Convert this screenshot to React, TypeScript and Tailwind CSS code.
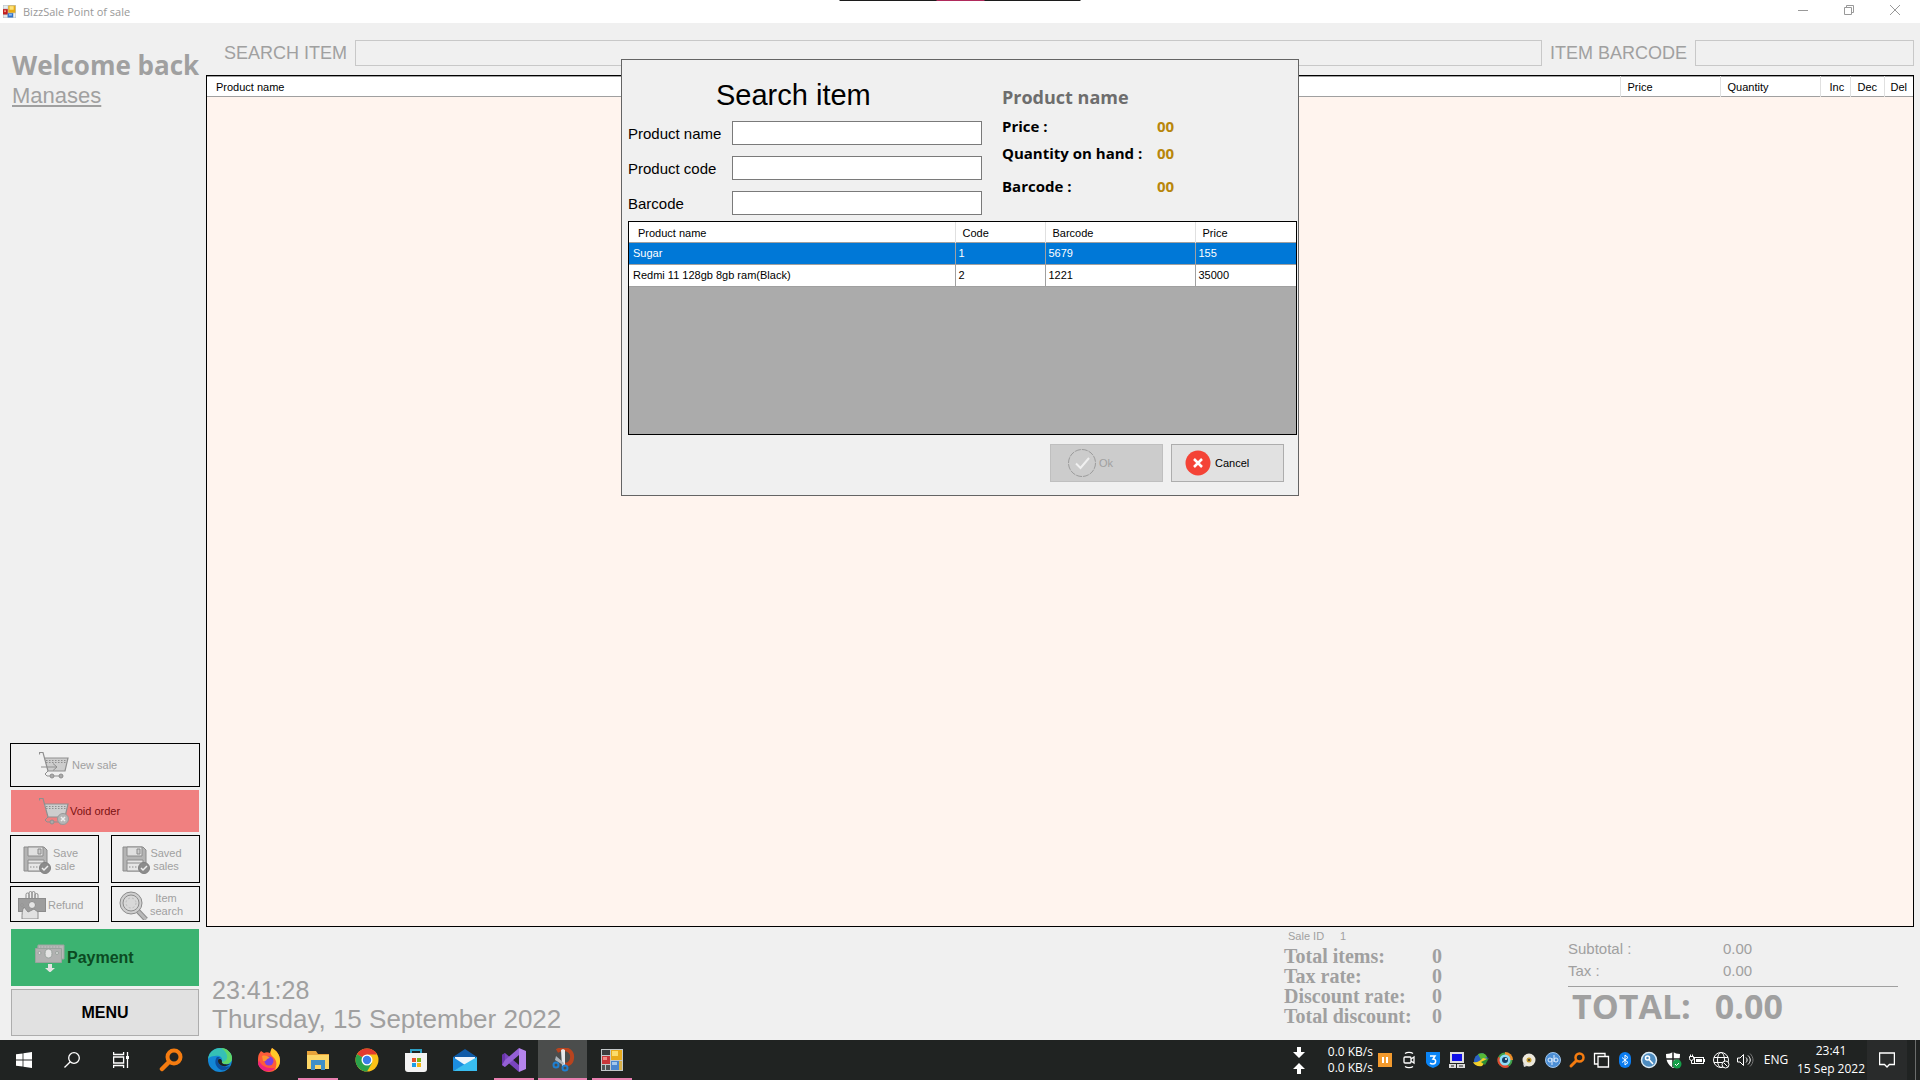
import React from 'react';
import clsx from 'clsx';

const products = [
  { name: 'Sugar', code: '1', barcode: '5679', price: '155' },
  { name: 'Redmi 11 128gb 8gb ram(Black)', code: '2', barcode: '1221', price: '35000' },
];

const searchFields = [
  { id: 'product-name', label: 'Product name' },
  { id: 'product-code', label: 'Product code' },
  { id: 'barcode', label: 'Barcode' },
];

const totals = ['Total items:', 'Tax rate:', 'Discount rate:', 'Total discount:'];

const FormIcon = ({ className }: { className: string }) => (
  <svg viewBox="0 0 22 22" className={className}>
    <rect x="0" y="0" width="22" height="22" fill="#b9c4cc" />
    <rect x="1" y="1" width="7" height="5" fill="#e6ecef" />
    <rect x="0" y="7" width="8" height="9" fill="#c41f1f" />
    <rect x="2" y="9" width="3" height="3" fill="#f0a090" />
    <rect x="9" y="1" width="12" height="12" fill="#e9ac14" />
    <rect x="11" y="2" width="7" height="6" fill="#fde27a" />
    <rect x="1" y="17" width="6" height="4" fill="#e4e8ea" />
    <rect x="8" y="14" width="9" height="7" fill="#2f70c9" />
    <rect x="10" y="15" width="5" height="3" fill="#8dbcf0" />
    <rect x="18" y="14" width="3" height="7" fill="#eef2f4" />
  </svg>
);

const FormIconLarge = () => (
  <svg viewBox="0 0 22 22" className="size-[22px]">
    <rect x="0" y="0" width="22" height="22" fill="#c3c8ca" />
    <rect x="1" y="1" width="8" height="5" fill="#3b3d3e" />
    <rect x="1" y="7" width="8" height="8" fill="#c9363a" />
    <rect x="2" y="8" width="4" height="3" fill="#f08c88" />
    <rect x="10" y="1" width="11" height="10" fill="#e9ab1c" />
    <rect x="11" y="2" width="6" height="5" fill="#fbdc6c" />
    <rect x="1" y="16" width="3" height="5" fill="#505355" />
    <rect x="5" y="16" width="4" height="5" fill="#505355" />
    <rect x="10" y="12" width="8" height="9" fill="#4b86cf" />
    <rect x="11" y="13" width="5" height="3" fill="#a5c8ec" />
    <rect x="18" y="12" width="3" height="9" fill="#d8b04a" />
  </svg>
);

const CartIcon = ({ voided = false }: { voided?: boolean }) => (
  <svg viewBox="0 0 30 28" className="h-7 w-[30px] shrink-0" fill="none" stroke="#8f8f8f">
    <path d="M5 7h24l-3 13H9z" fill="#cdcdcd" stroke="none" />
    <path d="M0.5 3.500V1.500H4l5 18.500M5 7h24l-3 13H9" strokeWidth="1.200" />
    <path d="M7 9.500h20M7 11.500h20" strokeDasharray="1.500 1.500" />
    <path d="M9 20l-3 3 2 2h16" />
    <circle cx="13" cy="25" r="2" fill="#aaa" />
    <circle cx="22" cy="25" r="2" fill="#aaa" />
    {voided ? (
      <>
        <circle cx="24" cy="22" r="5.500" fill="#b5b5b5" stroke="#999" />
        <path d="M22 20l4 4m0-4l-4 4" stroke="#eee" strokeWidth="1.500" />
      </>
    ) : (
      <path d="M2 16h16m-4-3.500l4 3.500-4 3.500" />
    )}
  </svg>
);

const FloppyIcon = () => (
  <svg viewBox="0 0 28 28" className="size-7 shrink-0" fill="none" stroke="#8c8c8c">
    <path d="M1 1h20l3 3v21H1z" fill="#b4b4b4" />
    <path d="M5 1h15v9H5z" fill="#e0e0e0" />
    <path d="M15 3h3v5h-3z" fill="#ccc" />
    <path d="M5 14h16v11H5z" fill="#e6e6e6" />
    <path d="M5 17h16" />
    <path d="M7 21h9" strokeDasharray="1.500 1.500" />
    <circle cx="22" cy="22" r="5.500" fill="#8c8c8c" stroke="#808080" />
    <path d="M19 22l2 2 4-4" stroke="#eee" strokeWidth="1.500" />
  </svg>
);

const RefundIcon = () => (
  <svg viewBox="0 0 28 28" className="h-7 w-7 shrink-0" fill="none" stroke="#8c8c8c">
    <path d="M8 8V3.500a1.500 1.500 0 013 0V7 2a1.500 1.500 0 013 0v5-5a1.500 1.500 0 013 0v6-4a1.500 1.500 0 013 0v5" fill="#efefef" />
    <rect x="0.500" y="7.500" width="27" height="13" fill="#9d9d9d" />
    <circle cx="14" cy="14" r="3.500" fill="#e5e5e5" />
    <circle cx="4" cy="14" r="1" fill="#ddd" />
    <path d="M4 28c0-5 0-9 2-12l4 5 6-3 4 3v7z" fill="#e1e1e1" />
  </svg>
);

const MagnifierIcon = () => (
  <svg viewBox="0 0 30 29" className="h-[29px] w-[30px] shrink-0" fill="none" stroke="#8c8c8c">
    <path d="M18 19l9 9.500" strokeWidth="5" />
    <path d="M19 20l8 8.500" stroke="#b9b9b9" strokeWidth="3" />
    <circle cx="12" cy="12" r="11" fill="#cfcfcf" />
    <circle cx="12" cy="12" r="8" fill="#d8d8d8" />
    <circle cx="12" cy="12" r="5" stroke="#bbb" strokeDasharray="2 2" />
  </svg>
);

const CashIcon = () => (
  <svg viewBox="0 0 30 28" className="h-7 w-[30px] shrink-0" fill="none" stroke="#9aa39e">
    <path d="M3 1h26v14H3z" fill="#b8b8b8" />
    <path d="M0.500 4.500h26v14h-26z" fill="#b1b1b1" />
    <path d="M2 3h23" strokeDasharray="1.500 1.500" />
    <ellipse cx="13.500" cy="9.500" rx="3.500" ry="4.500" fill="#e4e4e4" />
    <circle cx="4.500" cy="9" r="1.500" fill="#ddd" />
    <circle cx="22" cy="9" r="1.500" fill="#ddd" />
    <path d="M13 20h4v4h3l-5 4.500-5-4.500h3z" fill="#e2e2e2" stroke="none" />
  </svg>
);

type SideButtonProps = {
  icon: React.ReactNode;
  className: string;
  children: React.ReactNode;
};

const SideButton = ({ icon, className, children }: SideButtonProps) => (
  <button type="button" className={clsx('flex items-center overflow-hidden', className)}>
    {icon}
    {children}
  </button>
);

const Sidebar = () => (
  <aside className="flex w-[206px] shrink-0 flex-col justify-between pb-1 text-[11px] leading-[13px] text-[#a0a0a0]">
    <div className="pt-6 pl-3">
      <h1 className="font-['Open_Sans'] text-[26px] leading-9 font-bold whitespace-nowrap">Welcome back</h1>
      <a href="#user" className="text-[22px] leading-[26px] underline underline-offset-2">
        Manases
      </a>
    </div>
    <div className="flex flex-col gap-[3px] pr-1.5 pl-2.5">
      <SideButton icon={<CartIcon />} className="h-11 gap-[3px] border border-black pl-7">
        New sale
      </SideButton>
      <SideButton icon={<CartIcon voided />} className="mx-px h-[42px] gap-px bg-[#f08080] pl-7 text-[#7a1010]">
        Void order
      </SideButton>
      <div className="grid grid-cols-2 gap-x-3 gap-y-[3px]">
        <SideButton icon={<FloppyIcon />} className="h-12 gap-0.5 border border-black pt-0.5 pl-3">
          <span className="w-6">Save sale</span>
        </SideButton>
        <SideButton icon={<FloppyIcon />} className="h-12 border border-black pt-0.5 pl-2.5">
          <span className="w-8">Saved sales</span>
        </SideButton>
        <SideButton icon={<RefundIcon />} className="h-9 gap-0.5 border border-black pt-0.5 pl-[7px]">
          Refund
        </SideButton>
        <SideButton icon={<MagnifierIcon />} className="h-9 gap-px border border-black pt-0.5 pl-[7px]">
          <span className="w-8">Item search</span>
        </SideButton>
      </div>
      <SideButton
        icon={<CashIcon />}
        className="mx-px mt-1 h-[57px] gap-0.5 bg-[#3cb371] pl-6 text-base font-bold text-[#0b4a22]"
      >
        Payment
      </SideButton>
      <button type="button" className="mx-px h-[47px] border border-[#adadad] bg-[#e1e1e1] text-base font-bold text-black">
        MENU
      </button>
    </div>
  </aside>
);

const SaleTable = () => (
  <div className="flex-1 border border-black bg-[#fff4ee]">
    <table className="w-full table-fixed border-collapse bg-white text-left text-[11px] leading-4">
      <thead>
        <tr className="h-5 border-t border-b border-[#a0a0a0]">
          <th className="pl-[9px] font-normal">Product name</th>
          <th className="w-[100px] border-l border-[#e0e0e0] pl-[7px] font-normal">Price</th>
          <th className="w-[100px] border-l border-[#e0e0e0] pl-[7px] font-normal">Quantity</th>
          <th className="w-[30px] border-l border-[#e0e0e0] pl-[9px] font-normal">Inc</th>
          <th className="w-[34px] border-l border-[#e0e0e0] pl-[7px] font-normal">Dec</th>
          <th className="w-[29px] border-l border-[#e0e0e0] pl-1.5 font-normal">Del</th>
        </tr>
      </thead>
    </table>
  </div>
);

const Summary = () => (
  <footer className="flex h-[113px] shrink-0 justify-between pr-[22px]">
    <div className="flex flex-col justify-end pb-1.5 pl-1.5 text-[25px] leading-[29px]">
      <time>23:41:28</time>
      <span className="text-[26px]">Thursday, 15 September 2022</span>
    </div>
    <div className="flex">
      <div className="w-[284px] pt-px">
        <div className="flex gap-4 pb-0.5 pl-1 text-[11px] leading-4">
          <span>Sale ID</span>
          <span>1</span>
        </div>
        <dl className="grid grid-cols-[148px_1fr] font-['Liberation_Serif'] text-[20px] leading-5 font-bold">
          {totals.map(label => (
            <React.Fragment key={label}>
              <dt>{label}</dt>
              <dd>0</dd>
            </React.Fragment>
          ))}
        </dl>
      </div>
      <div className="w-[330px] pt-[11px]">
        <dl className="grid grid-cols-[155px_1fr] border-b border-[#a0a0a0] pb-1 text-[15px] leading-[22px]">
          <dt>Subtotal :</dt>
          <dd>0.00</dd>
          <dt>Tax :</dt>
          <dd>0.00</dd>
        </dl>
        <div className="flex gap-6 pl-1 font-['Open_Sans'] text-[34px] leading-[38px] font-bold">
          <span>TOTAL:</span>
          <span>0.00</span>
        </div>
      </div>
    </div>
  </footer>
);

const SearchDialog = () => (
  <div
    role="dialog"
    aria-labelledby="dialog-title"
    className="absolute top-[59px] left-1/2 w-[678px] -translate-x-1/2 border border-[#646464] bg-[#f0f0f0] pb-[13px] pl-1.5 text-black"
  >
    <div className="flex gap-5">
      <div className="w-[354px]">
        <h2 id="dialog-title" className="pt-[19px] pb-2.5 pl-[88px] text-[29px] leading-8">
          Search item
        </h2>
        <div className="flex flex-col gap-[11px]">
          {searchFields.map(({ id, label }) => (
            <div key={id} className="flex h-6 items-center justify-between">
              <label htmlFor={id} className="pt-px text-[15px] leading-5">
                {label}
              </label>
              <input id={id} className="h-6 w-[250px] border border-[#7a7a7a] bg-white px-1 text-[15px] outline-none" />
            </div>
          ))}
        </div>
      </div>
      <div className="pt-[25px] font-['Open_Sans'] text-[15px] leading-6 font-bold">
        <h3 className="mb-[5px] text-[18px] text-[#6d6d6d]">Product name</h3>
        <dl className="grid grid-cols-[155px_1fr]">
          <dt>Price :</dt>
          <dd className="text-[#b8860b]">00</dd>
          <dt className="pt-[3px]">Quantity on hand :</dt>
          <dd className="pt-[3px] text-[#b8860b]">00</dd>
          <dt className="pt-[9px]">Barcode :</dt>
          <dd className="pt-[9px] text-[#b8860b]">00</dd>
        </dl>
      </div>
    </div>
    <div className="mt-1.5 mr-px h-[214px] border border-black bg-[#ababab]">
      <table className="w-full table-fixed border-collapse bg-white text-left text-[11px] leading-4">
        <thead>
          <tr className="h-5 border-b border-[#a0a0a0]">
            <th className="pt-0.5 pl-[9px] font-normal">Product name</th>
            <th className="w-[90px] border-l border-[#e0e0e0] pt-0.5 pl-[7px] font-normal">Code</th>
            <th className="w-[150px] border-l border-[#e0e0e0] pt-0.5 pl-[7px] font-normal">Barcode</th>
            <th className="w-[101px] border-l border-[#e0e0e0] pt-0.5 pl-[7px] font-normal">Price</th>
          </tr>
        </thead>
        <tbody>
          {products.map((product, i) => (
            <tr key={product.code} className={clsx('h-[22px] border-b border-[#a0a0a0]', i === 0 && 'bg-[#0078d7] text-white')}>
              <td className="pl-1">{product.name}</td>
              <td className="border-l border-[#a0a0a0] pl-[3px]">{product.code}</td>
              <td className="border-l border-[#a0a0a0] pl-[3px]">{product.barcode}</td>
              <td className="border-l border-[#a0a0a0] pl-[3px]">{product.price}</td>
            </tr>
          ))}
        </tbody>
      </table>
    </div>
    <div className="mt-[9px] mr-3.5 flex justify-end gap-2 text-[11px]">
      <button
        type="button"
        disabled
        className="flex h-[38px] w-[113px] items-center gap-0.5 border border-[#bfbfbf] bg-[#cccccc] pl-4 text-[#a0a0a0]"
      >
        <svg viewBox="0 0 30 30" className="size-[30px]" fill="none">
          <circle cx="15" cy="15" r="13.500" stroke="#9c9c9c" strokeDasharray="6 1" />
          <path d="M9 15.500l4.500 4.500L22 10" stroke="#f0f0f0" strokeWidth="2" />
        </svg>
        Ok
      </button>
      <button type="button" className="flex h-[38px] w-[113px] items-center gap-1 border border-[#adadad] bg-[#e1e1e1] pl-[13px]">
        <svg viewBox="0 0 26 26" className="size-[26px]" fill="none">
          <circle cx="13" cy="13" r="12.500" fill="#f44336" />
          <path d="M9 9l8 8m0-8l-8 8" stroke="#fff" strokeWidth="2.500" />
        </svg>
        Cancel
      </button>
    </div>
  </div>
);

const apps = [
  {
    name: 'Finder',
    icon: (
      <g fill="none" stroke="#f57c10">
        <circle cx="15" cy="9" r="6.500" strokeWidth="4" />
        <path d="M10 14l-7 7" strokeWidth="4.500" strokeLinecap="round" />
      </g>
    ),
  },
  {
    name: 'Edge',
    icon: (
      <>
        <circle cx="12" cy="12" r="12" fill="#1386d6" />
        <path d="M0 11C1 4 6 0 12 0c7 0 12 5 12 10 0 4-3 6-6 6-4 0-5-1-4-3 1-4-3-6-7-5-3 0-6 1-7 3z" fill="#35c0b5" />
        <path d="M13 0c6 0 11 5 11 10 0 4-3 6-6 6-3 0-5-1-4-2 8-1 6-10-1-14z" fill="#5fd668" />
        <path d="M9 9c-3 4-2 10 4 13 4 1 7-1 9-4-6 2-12-1-12-5 0-2 1-3 2-4z" fill="#0c4f9f" />
        <path d="M14 13c-1-3-4-3-4 0 0 3 4 6 8 5 2-1 3-1 4-2-5 1-9 0-8-3z" fill="#1f2220" />
      </>
    ),
  },
  {
    name: 'Firefox',
    icon: (
      <>
        <path d="M2 6l2-3 3 2c2-1 4-1 6 0l2-5c5 3 8 7 8 13 0 6-5 11-11 11S1 19 1 13c0-3 0-5 1-7z" fill="#ff5b3a" />
        <path d="M15 0c5 3 8 7 8 13 0 4-2 7-5 9 3-7 1-11-3-14-2-2-2-5 0-8z" fill="#ffc928" />
        <path d="M2 12c2 6 8 9 16 8-6 6-15 3-17-4z" fill="#f0237c" />
        <circle cx="12" cy="13" r="4.500" fill="#7b3fe4" />
        <path d="M5 8c3-1 6 0 8 2-4 0-3 4-7 3z" fill="#ff9430" />
      </>
    ),
  },
  {
    name: 'File Explorer',
    open: true,
    icon: (
      <>
        <path d="M1 3h9l2 3h11v15H1z" fill="#e8a33a" />
        <path d="M1 7h22v14H1z" fill="#fcd667" />
        <path d="M5 12h14v10h-4v-5H9v5H5z" fill="#3f8fc9" />
      </>
    ),
  },
  {
    name: 'Chrome',
    icon: (
      <>
        <circle cx="12" cy="12" r="11.500" fill="#fbc116" />
        <path d="M12 12L2 6.300A11.500 11.500 0 0122 6.300z" fill="#e33b2e" />
        <path d="M2 6.300A11.500 11.500 0 0012 23.500l5-8.500-5-3z" fill="#2aa14b" />
        <path d="M12 6.500h10L17 15z" fill="#fbc116" />
        <circle cx="12" cy="12" r="5.500" fill="#fff" />
        <circle cx="12" cy="12" r="4.200" fill="#3b7de9" />
      </>
    ),
  },
  {
    name: 'Microsoft Store',
    icon: (
      <>
        <path d="M7 6V2h10v4" fill="none" stroke="#2d9fc4" strokeWidth="2" />
        <path d="M1 5h22v16a3 3 0 01-3 3H4a3 3 0 01-3-3z" fill="#f3f3f3" />
        <path d="M8 10h4v4H8z" fill="#e5502c" />
        <path d="M13 10h4v4h-4z" fill="#7cb518" />
        <path d="M8 15h4v4H8z" fill="#1c9ee8" />
        <path d="M13 15h4v4h-4z" fill="#f5b613" />
      </>
    ),
  },
  {
    name: 'Mail',
    icon: (
      <>
        <path d="M0 9l12-8 12 8v5H0z" fill="#0f5ba8" />
        <path d="M2 9h20v8H2z" fill="#eef5fb" />
        <path d="M0 9l12 8-12 6z" fill="#1c8de0" />
        <path d="M24 9v14H0l12-7z" fill="#39bdf0" />
      </>
    ),
  },
  {
    name: 'Visual Studio',
    open: true,
    icon: (
      <>
        <path d="M17 0l7 3v18l-7 3z" fill="#b584ec" />
        <path d="M0 7l3-2 14 12v7L3 12z" fill="#7a45bf" />
        <path d="M0 17V7l3-2v14z" fill="#6935ab" />
        <path d="M3 19l14-12V0L3 12l-3 5z" fill="#9460d6" />
      </>
    ),
  },
  {
    name: 'Snipping Tool',
    open: true,
    active: true,
    icon: (
      <>
        <path d="M6 3c8-5 16 0 15 7 0 5-5 8-9 6" fill="none" stroke="#b8441f" strokeWidth="4" />
        <path d="M10 2l2-1 2 1v16h-3z" fill="#e6e9ec" />
        <path d="M5 8l8 7-1 2-8-5z" fill="#aab3ba" />
        <circle cx="5" cy="17" r="2.500" fill="none" stroke="#1e7fd0" strokeWidth="2" />
        <circle cx="14" cy="20" r="2.500" fill="none" stroke="#1e7fd0" strokeWidth="2" />
      </>
    ),
  },
];

const trayIcons = [
  {
    name: 'Pause',
    icon: (
      <>
        <rect x="1" y="1" width="14" height="14" fill="#f29a2e" />
        <path d="M6 5v6m4-6v6" stroke="#fff" strokeWidth="2" />
      </>
    ),
  },
  {
    name: 'Meet now',
    icon: (
      <g fill="none" stroke="#fff" strokeWidth="1.300">
        <rect x="3" y="5" width="7" height="6" rx="1" />
        <path d="M10 7l3-2v6l-3-2M4 1.500c2-1.500 6-1.500 8 0M4 14.500c2 1.500 6 1.500 8 0" />
      </g>
    ),
  },
  {
    name: 'Shield',
    icon: (
      <>
        <path d="M1 0h14v10c0 3-4 5-7 6-3-1-7-3-7-6z" fill="#0a84f5" />
        <path d="M5 4h5L8 7c4 0 3 5 0 5-1 0-2 0-3-1" fill="none" stroke="#fff" strokeWidth="1.500" />
      </>
    ),
  },
  {
    name: 'Remote display',
    icon: (
      <>
        <path d="M1 0h14v11H1zM0 12h7v4H0zM8 12h8v4H8z" fill="#dcdcdc" />
        <rect x="3" y="2" width="10" height="7" fill="#1010e8" />
        <path d="M2 14h3m5 0h4" stroke="#222" />
      </>
    ),
  },
  {
    name: 'Download manager',
    icon: (
      <>
        <path d="M1 9c0-5 5-8 9-8l5 5-6 7c-4 1-8-1-8-4z" fill="#2a62c4" />
        <path d="M5 2c5-2 8 0 9 3L8 8z" fill="#55b938" />
        <path d="M0 10c4 1 7-1 10-4l5 1-6 7c-4 1-8-1-9-4z" fill="#f2cf2a" />
        <path d="M8 10l8-4-4 7z" fill="#2e8f35" />
      </>
    ),
  },
  {
    name: 'Eye',
    icon: (
      <>
        <circle cx="8" cy="8" r="7.500" fill="#42a047" />
        <path d="M8 0a8 8 0 018 8H8z" fill="#ee8f28" />
        <path d="M1 5a8 8 0 0011 10L8 8z" fill="#e0492f" />
        <circle cx="8" cy="8" r="5.500" fill="#8fdcf5" />
        <circle cx="8" cy="8" r="3" fill="#143f66" />
        <circle cx="9" cy="7" r="1" fill="#fff" />
      </>
    ),
  },
  {
    name: 'Disc',
    icon: (
      <>
        <circle cx="8" cy="8" r="6.500" fill="#ece8dc" />
        <circle cx="8" cy="8" r="2.500" fill="#c49b2a" />
        <circle cx="8" cy="8" r="1" fill="#333" />
        <path d="M2 11l4 3-3 1z" fill="#ddd" />
      </>
    ),
  },
  {
    name: 'Torrent client',
    icon: (
      <>
        <circle cx="8" cy="8" r="7.500" fill="#4c8fd6" stroke="#9cc4ec" />
        <g fill="none" stroke="#dcecff">
          <circle cx="5" cy="8" r="2" />
          <circle cx="11" cy="8" r="2" />
          <path d="M7 6v7M9 3v7" />
        </g>
      </>
    ),
  },
  {
    name: 'Finder',
    icon: (
      <g fill="none" stroke="#f57c10">
        <circle cx="10.500" cy="5.500" r="4" strokeWidth="2.500" />
        <path d="M7 9l-5 5" strokeWidth="3" strokeLinecap="round" />
      </g>
    ),
  },
  {
    name: 'Windows',
    icon: (
      <g fill="none" stroke="#fff" strokeWidth="1.300">
        <path d="M5 4.500h10.500v10.500H5z" />
        <path d="M5 12H1.500V1.500H12v3" />
      </g>
    ),
  },
  {
    name: 'Bluetooth',
    icon: (
      <>
        <rect x="2" y="0" width="12" height="16" rx="6" fill="#0a7cf0" />
        <path d="M5 5.500l6 5-3 2.500V3l3 2.500-6 5" fill="none" stroke="#fff" />
      </>
    ),
  },
  {
    name: 'Key',
    icon: (
      <>
        <circle cx="8" cy="8" r="7.500" fill="#4d8cc0" stroke="#dcebf5" strokeWidth="1.500" />
        <circle cx="6.500" cy="6" r="2" fill="none" stroke="#fff" strokeWidth="1.500" />
        <path d="M8 7.500l4 4.500" stroke="#fff" strokeWidth="1.500" />
      </>
    ),
  },
  {
    name: 'Security',
    icon: (
      <>
        <path d="M1 2c3 0 5-1 7-2 2 1 4 2 7 2 0 7-2 11-7 14C3 13 1 9 1 2z" fill="#fff" />
        <path d="M8 0v15M1 7h14" stroke="#202322" strokeWidth="1.500" />
        <circle cx="12" cy="12" r="4.500" fill="#16a04a" />
        <path d="M10 12l1.500 1.500L14 11" fill="none" stroke="#fff" />
      </>
    ),
  },
  {
    name: 'Battery',
    icon: (
      <>
        <path d="M0.500 4.500h4v2a2 2 0 01-4 0zM1.500 2.500v2M3.500 2.500v2M2.500 8.500v3H5" fill="none" stroke="#fff" />
        <rect x="5.500" y="5.500" width="9" height="6" fill="#202322" stroke="#fff" />
        <rect x="7" y="7" width="6" height="3" fill="#fff" />
        <path d="M15.500 7v3" stroke="#fff" />
      </>
    ),
  },
  {
    name: 'Network',
    icon: (
      <>
        <g fill="none" stroke="#fff">
          <circle cx="8" cy="8" r="7.500" />
          <ellipse cx="8" cy="8" rx="3.500" ry="7.500" />
          <path d="M1 5.500h14M1 10.500h14" />
        </g>
        <circle cx="12.500" cy="12.500" r="3.500" fill="#202322" stroke="#fff" />
        <path d="M10.500 10.500l4 4" stroke="#fff" />
      </>
    ),
  },
  {
    name: 'Volume',
    icon: (
      <g fill="none" stroke="#fff">
        <path d="M0.500 6h2.500l3.500-3.500v11L3 10H0.500z" />
        <path d="M9 5.500c1.500 1.500 1.500 3.500 0 5M11 3.500c3 3 3 6 0 9" />
        <path d="M13 1.500c4 4 4 9 0 13" stroke="#777" />
      </g>
    ),
  },
];

const Taskbar = () => (
  <nav className="flex h-10 shrink-0 items-stretch justify-between bg-[#202322] font-['Open_Sans'] text-[12px] leading-4 text-white">
    <div className="flex">
      <button type="button" aria-label="Start" className="flex w-12 items-center justify-center">
        <svg viewBox="0 0 16 16" className="size-4" fill="#fff">
          <path d="M0 2.300L6.600 1.400v6.200H0zM7.400 1.300L16 0v7.600H7.400zM0 8.400h6.600v6.200L0 13.700zM7.400 8.400H16V16l-8.600-1.300z" />
        </svg>
      </button>
      <button type="button" aria-label="Search" className="flex w-12 items-center justify-center">
        <svg viewBox="0 0 16 16" className="size-4" fill="none" stroke="#fff" strokeWidth="1.300">
          <circle cx="10" cy="6" r="5.300" />
          <path d="M6.300 9.700L0.500 15.500" />
        </svg>
      </button>
      <button type="button" aria-label="Task view" className="flex w-[50px] items-center justify-center">
        <svg viewBox="0 0 16 16" className="size-4" fill="none" stroke="#fff" strokeWidth="1.300">
          <path d="M0.600 0v2.500h10V0M0.600 16v-2.500h10V16M0.600 5h10v6h-10zM14.500 0v16" />
          <path d="M13 4h3v3h-3z" fill="#fff" stroke="none" />
        </svg>
      </button>
      {apps.map(({ name, icon, open, active }) => (
        <button
          key={name}
          type="button"
          aria-label={name}
          className={clsx('flex w-[49px] flex-col items-center justify-between pt-2', active && 'bg-[#4b4d4c]')}
        >
          <svg viewBox="0 0 24 24" className="size-6">
            {icon}
          </svg>
          {open && <span className={clsx('h-0.5 bg-[#e87fb0]', active ? 'w-full' : 'w-10')} />}
        </button>
      ))}
      <button type="button" aria-label="BizzSale" className="flex w-[49px] flex-col items-center justify-between pt-[9px]">
        <FormIconLarge />
        <span className="h-0.5 w-10 bg-[#e87fb0]" />
      </button>
    </div>
    <div className="flex items-center">
      <div className="grid grid-cols-[35px_auto] items-center">
        <svg viewBox="0 0 12 11" className="h-[11px] w-3" fill="#fff">
          <path d="M4 0h4v5h4l-6 6-6-6h4z" />
        </svg>
        <span>0.0 KB/s</span>
        <svg viewBox="0 0 12 11" className="h-[11px] w-3" fill="#fff">
          <path d="M4 11h4V6h4L6 0 0 6h4z" />
        </svg>
        <span>0.0 KB/s</span>
      </div>
      {trayIcons.map(({ name, icon }) => (
        <button key={name} type="button" aria-label={name} className="flex w-6 justify-center">
          <svg viewBox="0 0 16 16" className="size-4 overflow-visible">
            {icon}
          </svg>
        </button>
      ))}
      <span className="w-[38px] text-center">ENG</span>
      <div className="flex w-[72px] flex-col items-center leading-[18px] whitespace-nowrap">
        <span>23:41</span>
        <span>15 Sep 2022</span>
      </div>
      <button type="button" aria-label="Notifications" className="flex w-10 items-center justify-center self-stretch bg-[#292b2b]">
        <svg viewBox="0 0 16 16" className="size-4" fill="none" stroke="#fff" strokeWidth="1.300">
          <path d="M0.600 1h14.800v11.500h-5L8 15l-2.500-2.500H0.600z" />
        </svg>
      </button>
      <div className="mr-1 ml-2 w-px self-stretch bg-[#6b6d6c]" />
    </div>
  </nav>
);

const TitleBar = () => (
  <header className="flex h-[23px] shrink-0 items-start justify-between bg-white text-[#999]">
    <div className="flex items-center gap-[7px] pt-[3px] pl-[3px] font-['Open_Sans'] text-[11px] leading-[17px]">
      <FormIcon className="size-[13px]" />
      BizzSale Point of sale
    </div>
    <div className="flex h-5 pr-0.5">
      <button type="button" aria-label="Minimize" className="flex w-[46px] items-center justify-center">
        <svg viewBox="0 0 10 10" className="size-2.5" stroke="currentColor">
          <path d="M0 5.500h10" />
        </svg>
      </button>
      <button type="button" aria-label="Restore" className="flex w-[46px] items-center justify-center">
        <svg viewBox="0 0 10 10" className="size-2.5" fill="none" stroke="currentColor">
          <path d="M0.500 2.500h7v7h-7zM2.500 2.500v-2h7v7h-2" />
        </svg>
      </button>
      <button type="button" aria-label="Close" className="flex w-[46px] items-center justify-center">
        <svg viewBox="0 0 10 10" className="size-2.5" stroke="currentColor">
          <path d="M0 0l10 10M10 0L0 10" />
        </svg>
      </button>
    </div>
  </header>
);

export default function App() {
  return (
    <div className="relative flex min-h-screen flex-col bg-[#f0f0f0] font-['Liberation_Sans',sans-serif] text-black">
      <TitleBar />
      <div className="absolute top-0 left-1/2 flex h-px w-[241px] -translate-x-1/2 justify-center bg-[#1c1c1c]">
        <span className="w-12 bg-[#b02a5b]" />
      </div>
      <div className="flex flex-1">
        <Sidebar />
        <main className="flex min-w-0 flex-1 flex-col text-[#a0a0a0]">
          <div className="flex items-center gap-2 pt-[17px] pr-1.5 pb-[9px] pl-[18px] text-[18px] leading-6">
            <label htmlFor="search-item">SEARCH ITEM</label>
            <input
              id="search-item"
              disabled
              className="h-[26px] min-w-0 flex-1 border border-[#c8c8c8] bg-[#f0f0f0]"
            />
            <label htmlFor="item-barcode">ITEM BARCODE</label>
            <input id="item-barcode" disabled className="h-[26px] w-[219px] border border-[#c8c8c8] bg-[#f0f0f0]" />
          </div>
          <div className="mr-1.5 flex flex-1 flex-col text-black">
            <SaleTable />
          </div>
          <Summary />
        </main>
      </div>
      <SearchDialog />
      <Taskbar />
    </div>
  );
}
